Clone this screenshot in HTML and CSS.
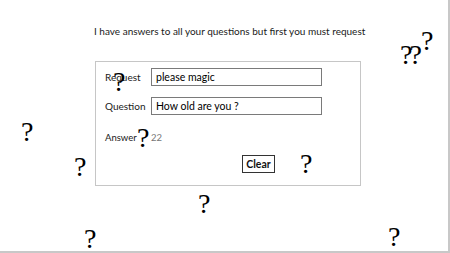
FILE: index.html
```html
<!DOCTYPE html>
<html lang="en">
<head>
  <meta charset="UTF-8">
  <meta name="viewport" content="width=device-width, initial-scale=1.0">
  <link rel="stylesheet" href="styles.css">
  <title>Magic Answers</title>
</head>
<body>

  <div class="page">
    <h1 class="intro">I have answers to all your questions but first you must request</h1>

    <form class="oracle">
      <label class="oracle-label" for="request">Request</label>
      <input class="oracle-input" type="text" id="request" value="please magic">

      <label class="oracle-label" for="question">Question</label>
      <input class="oracle-input" type="text" id="question" value="How old are you ?">

      <span class="oracle-label oracle-answer-label">Answer</span>
      <span class="oracle-answer">22</span>

      <div class="oracle-actions">
        <button type="button" class="clear-button">Clear</button>
      </div>
    </form>

    <span class="mark mark-request">?</span>
    <span class="mark mark-left">?</span>
    <span class="mark mark-left-low">?</span>
    <span class="mark mark-bottom-left">?</span>
    <span class="mark mark-answer">?</span>
    <span class="mark mark-clear">?</span>
    <span class="mark mark-under">?</span>
    <span class="mark mark-pair">??</span>
    <span class="mark mark-high">?</span>
    <span class="mark mark-bottom-right">?</span>
  </div>

</body>
</html>
```

FILE: styles.css
```css
body {
  margin: 0;
  background-color: #fff;
  font-family: 'Lato', 'Noto Sans', sans-serif;
  color: #1a1a1a;
}

.page {
  position: relative;
  box-sizing: border-box;
  width: 450px;
  height: 253px;
  padding-top: 25px;
  border-right: 2px solid #c8c8c8;
  border-bottom: 2px solid #c8c8c8;
  overflow: hidden;
}

.intro {
  margin: 0;
  margin-left: 94px;
  width: 270px;
  text-align: center;
  font-size: 10px;
  font-weight: 400;
  line-height: 13px;
  white-space: nowrap;
}

.oracle {
  display: grid;
  grid-template-columns: 46px 171px;
  grid-auto-rows: 18px;
  row-gap: 11px;
  align-items: center;
  box-sizing: border-box;
  width: 266px;
  height: 125px;
  margin-top: 23px;
  margin-left: 95px;
  padding: 6px 0 0 9px;
  border: 1px solid #c6c6c6;
}

.oracle-label {
  font-size: 10px;
  color: #1a1a1a;
}

.oracle-input {
  box-sizing: border-box;
  width: 171px;
  height: 18px;
  margin: 0;
  padding: 0 4px;
  border: 1px solid #7a7a7a;
  border-radius: 0;
  font-family: inherit;
  font-size: 10.5px;
  color: #000;
}

.oracle-answer-label,
.oracle-answer {
  align-self: end;
  font-size: 9.5px;
  line-height: 12px;
}

.oracle-answer {
  color: #777;
}

.oracle-actions {
  grid-column: 1 / 3;
  display: flex;
  justify-content: flex-end;
  padding-right: 47px;
}

.clear-button {
  box-sizing: border-box;
  width: 33px;
  height: 18px;
  padding: 0;
  background-color: #fff;
  border: 1px solid #333;
  border-radius: 0;
  font-family: inherit;
  font-size: 10.5px;
  font-weight: 700;
  color: #111;
}

/* floating question marks scattered over the page */
.mark {
  position: absolute;
  font-family: 'Liberation Serif', serif;
  font-size: 28px;
  line-height: 1;
  color: #000;
}

.mark-request { left: 113px; top: 68px; }
.mark-left { left: 21px; top: 118px; }
.mark-left-low { left: 74px; top: 153px; }
.mark-bottom-left { left: 84px; top: 225px; }
.mark-answer { left: 137px; top: 124px; }
.mark-clear { left: 300px; top: 150px; }
.mark-under { left: 198px; top: 190px; }
.mark-pair { left: 400px; top: 41px; letter-spacing: -3px; }
.mark-high { left: 421px; top: 27px; }
.mark-bottom-right { left: 388px; top: 223px; }
```
